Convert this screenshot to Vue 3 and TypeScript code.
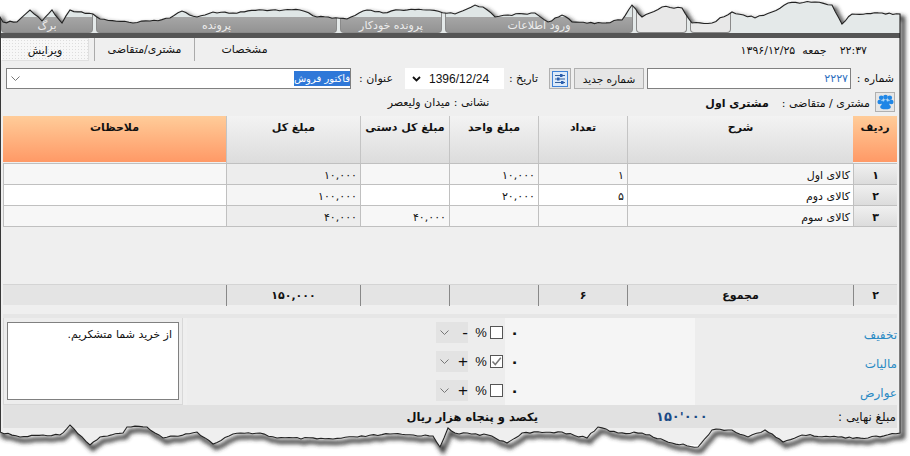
<script setup lang="ts">
type Pt = [number, number]
const topEdge: Pt[] = [[0,17],[3,22],[17,22],[30,10],[42,21],[52,10],[62,23],[70,10],[93,14],[100,19],[133,23],[150,21],[170,18],[182,11],[197,17],[213,12],[233,13],[263,10],[300,10],[317,17],[347,19],[367,10],[383,13],[400,10],[430,10],[455,14],[475,5],[483,7],[495,17],[508,15],[535,13],[548,22],[562,15],[572,22],[602,23],[622,20],[632,5],[642,17],[662,7],[682,8],[692,23],[712,23],[732,12],[755,18],[772,12],[788,3],[815,2],[832,5],[842,24],[852,14],[882,13],[900,14]]
const bottomEdge: Pt[] = [[0,432],[20,437],[43,435],[60,435],[70,425],[90,445],[100,437],[123,433],[127,427],[147,427],[163,438],[197,432],[213,444],[233,434],[260,433],[277,438],[333,439],[390,434],[433,436],[440,447],[448,428],[455,433],[488,435],[507,443],[522,433],[562,432],[587,438],[598,427],[618,433],[642,433],[672,443],[698,447],[712,430],[732,430],[748,437],[765,430],[783,442],[802,435],[838,437],[868,438],[900,433]]
function jag(pts: Pt[]): Pt[] {
  const out: Pt[] = []
  let n = 0
  for (let i = 0; i < pts.length - 1; i++) {
    const [x0, y0] = pts[i]
    const [x1, y1] = pts[i + 1]
    const steps = Math.max(1, Math.round(Math.abs(x1 - x0) / 4))
    for (let s = 0; s < steps; s++) {
      const t = s / steps
      const r = s === 0 ? 0 : Math.sin(++n * 12.9898) * 43758.5453
      const d = s === 0 ? 0 : (r - Math.floor(r) - 0.5) * 1.8
      out.push([+(x0 + (x1 - x0) * t).toFixed(1), +(y0 + (y1 - y0) * t + d).toFixed(1)])
    }
  }
  out.push(pts[pts.length - 1])
  return out
}
const toD = (p: Pt[]) => p.map(([x, y]) => `${x} ${y}`).join(' L')
const outline = `M${toD(jag(topEdge))} L${toD(jag(bottomEdge).reverse())} Z`
const outside = `M0 0H910V456H0Z ${outline}`

const appTabs = [
  { label: '', w: 41, light: true },
  { label: '', w: 51, light: true },
  { label: 'ورود اطلاعات', w: 188, light: false },
  { label: 'پرونده خودکار', w: 102, light: false },
  { label: 'پرونده', w: 241, light: false },
  { label: 'برگ', w: 92, light: false },
]
const heads = [
  { t: 'ردیف', accent: true }, { t: 'شرح' }, { t: 'تعداد' }, { t: 'مبلغ واحد' },
  { t: 'مبلغ کل دستی' }, { t: 'مبلغ کل' }, { t: 'ملاحظات', accent: true },
]
const rows = [
  ['۱', 'کالای اول', '۱', '۱۰,۰۰۰', '', '۱۰,۰۰۰', ''],
  ['۲', 'کالای دوم', '۵', '۲۰,۰۰۰', '', '۱۰۰,۰۰۰', ''],
  ['۳', 'کالای سوم', '', '', '۴۰,۰۰۰', '۴۰,۰۰۰', ''],
]
const totals = ['۲', 'مجموع', '۶', '', '', '۱۵۰,۰۰۰', '']
const adjustments = [
  { label: 'تخفیف', sign: '-', checked: false },
  { label: 'مالیات', sign: '+', checked: true },
  { label: 'عوارض', sign: '+', checked: false },
]
</script>

<template>
  <div class="page">
    <div class="win" dir="rtl">
      <div class="apptabs">
        <div v-for="(t, i) in appTabs" :key="i" class="apptab" :class="{ light: t.light }" :style="{ width: t.w + 'px' }">{{ t.label }}</div>
      </div>

      <div class="subbar">
        <div class="clock"><span class="time">۲۲:۳۷</span><span class="day">جمعه</span><span>۱۳۹۶/۱۲/۲۵</span></div>
        <div class="subtabs">
          <div class="subtab">مشخصات</div>
          <div class="subtab">مشتری/متقاضی</div>
          <div class="subtab active">ویرایش</div>
        </div>
      </div>

      <div class="formrow">
        <span class="lbl lbl-num">شماره :</span>
        <div class="field num">۲۲۲۷</div>
        <button class="btn">شماره جدید</button>
        <div class="iconbtn small">
          <svg width="16" height="16" viewBox="0 0 16 16">
            <rect x="0.5" y="0.5" width="15" height="15" fill="#dceafa" stroke="#3f82d6" />
            <path d="M3 4.5H13M3 8H13M3 11.5H13" stroke="#35609a" stroke-width="1" />
            <rect x="8" y="3" width="2.5" height="3" fill="#2a5fb0" />
            <rect x="5" y="6.5" width="2.5" height="3" fill="#2a5fb0" />
            <rect x="9" y="10" width="2.5" height="3" fill="#2a5fb0" />
          </svg>
        </div>
        <span class="lbl lbl-date">تاریخ :</span>
        <div class="date" dir="ltr">
          <svg width="9" height="6" viewBox="0 0 9 6"><path d="M1 1L4.5 4.5L8 1" fill="none" stroke="#111" stroke-width="1.8" /></svg>
          <span>1396/12/24</span>
        </div>
        <span class="lbl lbl-title">عنوان :</span>
        <div class="combo">
          <span class="sel">فاکتور فروش</span>
          <svg width="9" height="6" viewBox="0 0 9 6"><path d="M0.5 0.5L4.5 4.5L8.5 0.5" fill="none" stroke="#777" /></svg>
        </div>
      </div>

      <div class="custrow">
        <div class="iconbtn">
          <svg width="17" height="16" viewBox="0 0 16 14">
            <g fill="#1f86e6">
              <circle cx="4" cy="3" r="2.2" /><circle cx="8" cy="2.4" r="2.2" /><circle cx="12" cy="3" r="2.2" />
              <circle cx="2.6" cy="7" r="2.2" /><circle cx="13.4" cy="7" r="2.2" />
              <ellipse cx="8" cy="8" rx="4" ry="3.4" /><ellipse cx="8" cy="11.6" rx="5" ry="2.2" />
            </g>
            <circle cx="6" cy="5.5" r="1" fill="#a9dbff" /><circle cx="10" cy="5.5" r="1" fill="#a9dbff" />
          </svg>
        </div>
        <span class="custlabel">مشتری / متقاضی :</span>
        <b class="custname">مشتری اول</b>
        <span class="address">نشانی : میدان ولیعصر</span>
      </div>

      <div class="grid head">
        <div v-for="h in heads" :key="h.t" class="hcell" :class="{ accent: h.accent }">{{ h.t }}</div>
      </div>
      <div v-for="(r, i) in rows" :key="i" class="grid datarow" :class="{ even: i === 1 }">
        <div v-for="(c, j) in r" :key="j" class="cell" :class="{ rowno: j === 0, total: j === 5, digits: j >= 2 }">{{ c }}</div>
      </div>

      <div class="spacer"></div>

      <div class="grid sumrow">
        <div v-for="(c, j) in totals" :key="j" class="scell">{{ c }}</div>
      </div>

      <div class="band"></div>

      <div class="lower">
        <div class="adj">
          <div v-for="a in adjustments" :key="a.label" class="adjrow">
            <div class="adjlabel">{{ a.label }}</div>
            <div class="adjvalue">۰</div>
            <div class="check">
              <svg v-if="a.checked" width="11" height="11" viewBox="0 0 11 11"><path d="M1.5 5.5L4.3 8.5L9.8 1.8" fill="none" stroke="#777" stroke-width="1.5" /></svg>
            </div>
            <span class="pct">%</span>
            <div class="signbox">
              <span class="sign">{{ a.sign }}</span>
              <svg width="9" height="6" viewBox="0 0 9 6"><path d="M0.5 0.5L4.5 4.5L8.5 0.5" fill="none" stroke="#777" /></svg>
            </div>
          </div>
        </div>
        <div class="notes"><div class="notebox">از خرید شما متشکریم.</div></div>
      </div>

      <div class="finalbar">
        <span class="finallabel">مبلغ نهایی :</span>
        <b class="amount">۱۵۰'۰۰۰</b>
        <b class="words">یکصد و پنجاه  هزار  ریال</b>
      </div>
    </div>

    <svg class="tear" width="910" height="456" viewBox="0 0 910 456">
      <defs>
        <clipPath id="outside"><path :d="outside" clip-rule="evenodd" /></clipPath>
        <filter id="soft" x="-5%" y="-5%" width="110%" height="110%"><feGaussianBlur stdDeviation="2" /></filter>
      </defs>
      <path :d="outside" fill="#fff" fill-rule="evenodd" />
      <g clip-path="url(#outside)">
        <path :d="outline" transform="translate(3 4)" fill="none" stroke="#333" stroke-width="4" filter="url(#soft)" />
      </g>
      <path :d="outline" fill="none" stroke="#222" stroke-width="1.1" />
    </svg>
  </div>
</template>

<style scoped>
.page {
  position: relative;
  width: 910px;
  height: 456px;
  overflow: hidden;
  background: #fff;
  font-family: "DejaVu Sans", "Noto Sans", sans-serif;
  font-size: 11px;
  color: #111;
}
.win {
  width: 899px;
  height: 445px;
  box-sizing: content-box;
  display: flex;
  flex-direction: column;
  background: #efefef;
  border-left: 1px solid #555;
  border-right: 2px solid #555;
}
.apptabs {
  height: 33px;
  padding-right: 169px;
  display: flex;
  gap: 3px;
  background: #e4e9e9;
  border-bottom: 5px solid;
  border-image: linear-gradient(#f0f0f0 0 60%, #555 60% 100%) 1;
}
.apptab {
  box-sizing: border-box;
  height: 33px;
  padding-top: 19px;
  text-align: center;
  font-size: 11px;
  line-height: 13px;
  color: #ececec;
  background: linear-gradient(#dfe6e6 0 17px, #a6a6a6 17px, #939393 100%);
  border: 1px solid #8a8a8a;
  border-top: 0;
  border-radius: 0 0 4px 4px;
}
.apptab.light {
  background: #e8e8e8;
}
.subbar {
  height: 23px;
  display: flex;
  align-items: stretch;
  padding-right: 33px;
}
.clock {
  display: flex;
  align-items: center;
  padding-top: 1px;
}
.time {
  margin-left: 13px;
}
.day {
  margin-left: 7px;
}
.subtabs {
  margin-right: auto;
  display: flex;
}
.subtab {
  box-sizing: border-box;
  width: 100px;
  border-left: 1px solid #aaa;
  text-align: center;
  line-height: 24px;
}
.subtab.active {
  width: 88px;
  margin-right: 5px;
  background: #f7f7f7 radial-gradient(#ddd 0.5px, transparent 0.6px) 0 0 / 3px 3px;
  border: 1px solid #e0e0e0;
  border-left-color: #fff;
}
.formrow {
  margin-top: 7px;
  height: 21px;
  display: flex;
  align-items: center;
  padding-right: 6px;
}
.lbl {
  flex: none;
  white-space: nowrap;
}
.lbl-num { width: 43px; }
.field {
  box-sizing: border-box;
  width: 204px;
  height: 21px;
  background: #fff;
  border: 1px solid #808080;
  padding: 0 2px;
  line-height: 19px;
  color: #2f6fc0;
}
.btn {
  box-sizing: border-box;
  width: 70px;
  height: 21px;
  margin-right: 3px;
  padding: 0;
  background: #e6e6e6;
  border: 1px solid #b0b0b0;
  font: inherit;
  font-size: 10.5px;
  color: #111;
}
.iconbtn {
  box-sizing: border-box;
  width: 20px;
  height: 20px;
  display: flex;
  align-items: center;
  justify-content: center;
  background: #e6e6e6;
  border: 1px solid #b0b0b0;
}
.iconbtn.small {
  width: 22px;
  height: 21px;
  margin-right: 3px;
}
.lbl-date {
  width: 45px;
  padding-right: 11px;
  box-sizing: border-box;
}
.date {
  box-sizing: border-box;
  width: 99px;
  height: 21px;
  margin-right: 0;
  background: #fff;
  display: flex;
  align-items: center;
  gap: 8px;
  padding-left: 7px;
  font-family: "Liberation Sans", sans-serif;
  font-size: 12px;
}
.lbl-title {
  width: 54px;
  padding-right: 12px;
  box-sizing: border-box;
}
.combo {
  box-sizing: border-box;
  width: 345px;
  height: 21px;
  background: #fff;
  border: 1px solid #808080;
  display: flex;
  align-items: center;
  justify-content: space-between;
  padding-left: 4px;
}
.sel {
  background: #2f78d8;
  color: #fff;
  font-size: 10px;
  line-height: 15px;
}
.custrow {
  margin-top: 3px;
  height: 24px;
  display: flex;
  padding-right: 5px;
  align-items: flex-start;
}
.custlabel {
  margin-right: 5px;
  line-height: 23px;
}
.custname {
  margin-right: 13px;
  line-height: 23px;
}
.address {
  margin-right: 216px;
  line-height: 21px;
}
.grid {
  display: grid;
  grid-template-columns: 44px 226px 89px 89px 89px 134px 223px;
  width: 894px;
  margin-right: 3px;
}
.head {
  height: 48px;
  border-bottom: 1px solid #c0c0c0;
  box-sizing: border-box;
}
.hcell {
  box-sizing: border-box;
  background: linear-gradient(#f3f3f3, #dcdcdc);
  border-left: 1px solid #c4c4c4;
  text-align: center;
  font-weight: 700;
  padding-top: 5px;
}
.hcell.accent {
  background: linear-gradient(#ffcc99, #ff9966);
  height: 46px;
  border-left: 0;
}
.datarow {
  height: 21px;
  border-bottom: 1px solid #c0c0c0;
  box-sizing: border-box;
  background: #f7f7f7;
}
.datarow.even {
  background: #fff;
}
.cell {
  box-sizing: border-box;
  border-left: 1px solid #c0c0c0;
  padding: 0 3px;
  line-height: 23px;
  height: 20px;
  white-space: nowrap;
  overflow: hidden;
}
.cell.digits {
  letter-spacing: 1.2px;
}
.cell.rowno {
  background: linear-gradient(#f0f0f0, #dcdcdc);
  font-weight: 700;
  text-align: center;
}
.cell.total {
  background: #ededed;
}
.even .cell.total {
  background: #f5f5f5;
}
.spacer {
  height: 57px;
}
.sumrow {
  height: 21px;
  background: #e4e4e4;
  border-top: 1px solid #d4d4d4;
  box-sizing: border-box;
}
.scell {
  box-sizing: border-box;
  border-left: 1px solid #888;
  text-align: center;
  font-weight: 700;
  line-height: 21px;
}
.scell:nth-child(7) {
  border-left: 0;
}
.band {
  margin: 9px 3px 0 0;
  width: 894px;
  height: 4px;
  background: #e6e6e6;
}
.lower {
  width: 894px;
  margin-right: 3px;
  height: 87px;
  display: flex;
}
.adj {
  flex: 1;
  background: #ededed;
}
.adjrow {
  height: 29px;
  display: flex;
  align-items: center;
}
.adjlabel {
  box-sizing: border-box;
  width: 202px;
  height: 29px;
  padding-top: 8px;
  font-size: 12px;
  line-height: 18px;
  color: #2a8ac4;
}
.adjvalue {
  box-sizing: border-box;
  width: 190px;
  height: 29px;
  background: #f5f5f5;
  padding-left: 5px;
  text-align: left;
  font-size: 15px;
  line-height: 31px;
  font-weight: 700;
  overflow: hidden;
}
.check {
  box-sizing: border-box;
  width: 13px;
  height: 13px;
  margin-right: 2px;
  background: #fff;
  border: 1px solid #555;
  display: flex;
  align-items: center;
  justify-content: center;
}
.pct {
  width: 14px;
  margin-right: 2px;
  text-align: center;
  font-family: "Liberation Sans", sans-serif;
  font-size: 13px;
}
.signbox {
  box-sizing: border-box;
  width: 32px;
  height: 21px;
  margin-right: 6px;
  background: #e3e3e3;
  display: flex;
  align-items: center;
  justify-content: space-between;
  padding-left: 4px;
}
.sign {
  font-family: "Liberation Sans", sans-serif;
  font-size: 17px;
  line-height: 20px;
}
.notes {
  box-sizing: border-box;
  width: 180px;
  margin-right: 4px;
  padding: 4px 3px;
  background: #ededed;
  border: 1px solid #d8d8d8;
  border-width: 0 1px 1px 1px;
}
.notebox {
  box-sizing: border-box;
  height: 78px;
  background: #fff;
  border: 1px solid #808080;
  padding: 5px 6px;
}
.finalbar {
  width: 894px;
  margin-right: 3px;
  height: 23px;
  display: flex;
  align-items: center;
  background: #e1e1e1;
  padding-right: 1px;
  box-sizing: border-box;
}
.finallabel {
  width: 175px;
  font-size: 12px;
  flex: none;
}
.amount {
  width: 65px;
  flex: none;
  color: #1c4a86;
  letter-spacing: 6.3px;
  font-size: 13px;
  direction: ltr;
  text-align: left;
  white-space: nowrap;
}
.words {
  margin-right: 118px;
  font-size: 11.5px;
  white-space: pre;
}
.tear {
  position: absolute;
  inset: 0;
  pointer-events: none;
}
</style>
